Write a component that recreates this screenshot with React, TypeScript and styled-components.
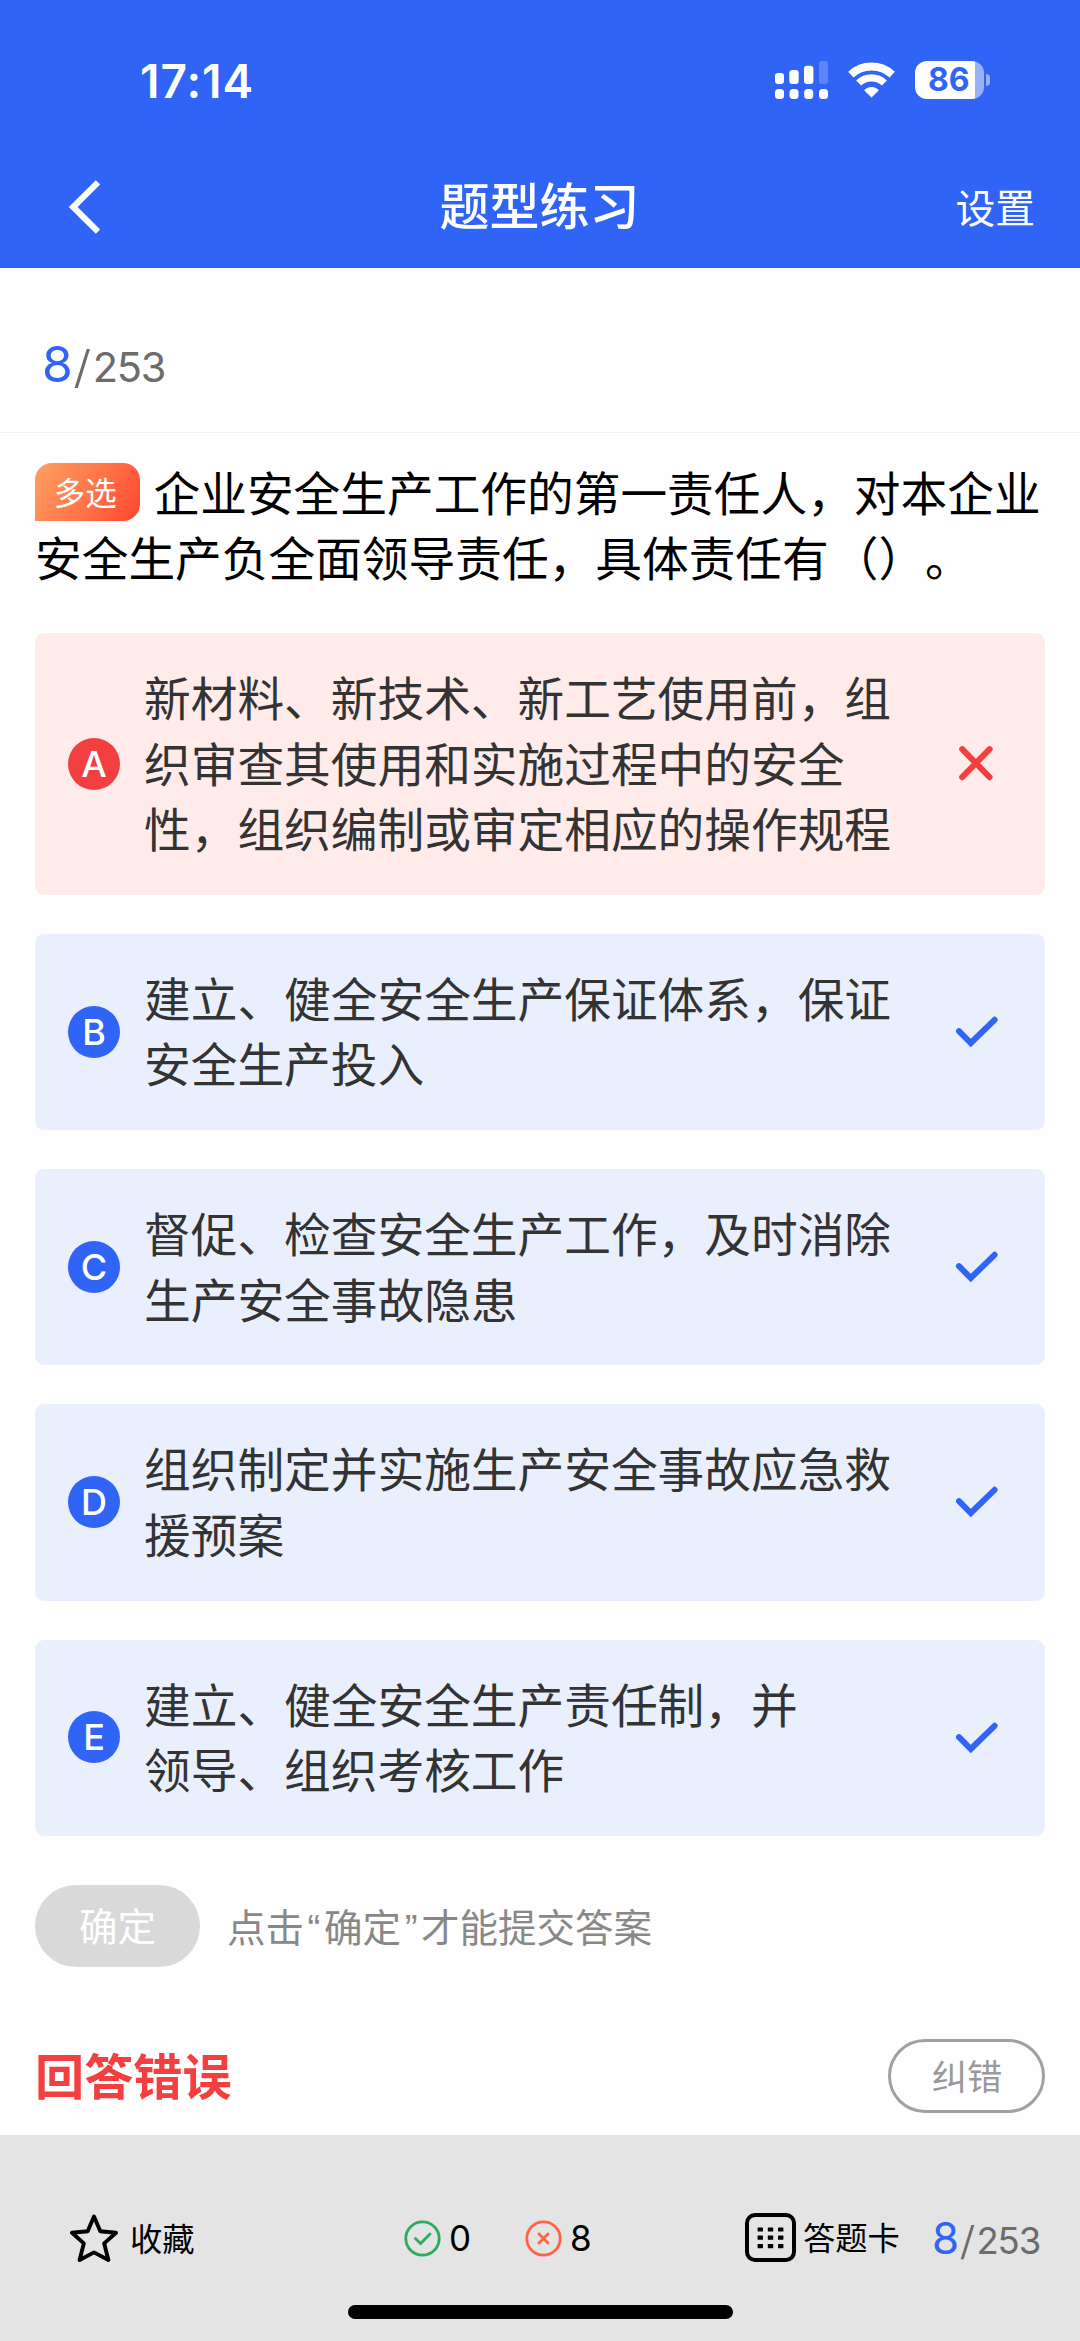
import React from "react";
import styled, { createGlobalStyle } from "styled-components";

const BLUE = "#3064f6";
const RED = "#f33f40";
const CJK = '"Noto Sans CJK SC", "Noto Sans", sans-serif';
const LATIN = 'Inter, "Liberation Sans", sans-serif';

const GlobalStyle = createGlobalStyle`
  * { box-sizing: border-box; }
  body {
    margin: 0;
    background: #fefefe;
    font-family: ${CJK};
    text-spacing-trim: space-all;
    -webkit-font-smoothing: antialiased;
  }
  button { font: inherit; border: 0; padding: 0; margin: 0; background: none; color: inherit; }
  svg { display: block; flex: none; }
`;

const Screen = styled.div`
  width: 1080px;
  height: 2341px;
  display: flex;
  flex-direction: column;
  overflow: hidden;
  background: #fefefe;
`;

const Header = styled.header`
  height: 268px;
  flex: none;
  background: ${BLUE};
  color: #fff;
`;

const StatusBar = styled.div`
  height: 160px;
  display: flex;
  justify-content: space-between;
  align-items: center;
  padding: 0 90px 0 140px;
`;

const Clock = styled.div`
  font: 600 46px/50px ${LATIN};
  letter-spacing: 1px;
  padding-top: 1px;
`;

const StatusIcons = styled.div`
  display: flex;
  align-items: center;
  gap: 20px;
`;

const Battery = styled.div`
  display: flex;
  align-items: center;
  gap: 2px;
`;

const BatteryBody = styled.div`
  width: 69px;
  height: 38px;
  border-radius: 12px;
  background: linear-gradient(to right, #fff 60px, #98b1fa 60px);
  color: ${BLUE};
  font: 700 32px/38px ${LATIN};
  padding-left: 13px;
`;

const BatteryTip = styled.div`
  width: 4px;
  height: 12px;
  border-radius: 0 4px 4px 0;
  background: #98b1fa;
`;

const NavBar = styled.nav`
  height: 94px;
  display: grid;
  grid-template-columns: 1fr auto 1fr;
  align-items: center;
  padding: 0 45px 0 68px;
`;

const NavTitle = styled.h1`
  margin: 0 0 8px;
  padding-right: 24px;
  font-size: 50px;
  line-height: 60px;
  font-weight: 500;
`;

const NavAction = styled.button`
  justify-self: end;
  font-size: 39.8px;
  line-height: 48px;
  margin-bottom: 2px;
`;

const ProgressRow = styled.div`
  height: 165px;
  flex: none;
  border-bottom: 1px solid #f1f1f1;
  padding: 67px 0 0 42px;
`;

const Counter = styled.div<{ $size: number }>`
  display: flex;
  align-items: baseline;
  font-family: ${LATIN};
  font-size: ${(p) => p.$size}px;
  line-height: 1.2;
  color: #6c6c6c;
`;

const Current = styled.span`
  color: ${BLUE};
  font-size: 1.2em;
`;

const Slash = styled.span`
  font-weight: 300;
  margin: 0 0.08em 0 0.05em;
  transform: scale(1.25, 1.08);
`;

const Total = styled.span`
  letter-spacing: -0.03em;
`;

const Content = styled.main`
  flex: none;
  height: 1702px;
  padding: 27px 35px 0;
`;

const Question = styled.p`
  margin: -2px 0 0;
  font-size: 46.7px;
  line-height: 65.3px;
  color: #000;
  white-space: nowrap;
`;

const Blank = styled.span`
  margin-left: 3px;
`;

const TypeTag = styled.span`
  display: inline-block;
  vertical-align: top;
  width: 104.5px;
  height: 58px;
  margin: 5px 14px 0 0;
  padding-right: 4px;
  border-radius: 17px 17px 17px 0;
  background: linear-gradient(120deg, #ffa062 0%, #ff7347 55%, #ff4430 100%);
  color: #fff;
  font-size: 31.5px;
  line-height: 56px;
  text-align: center;
`;

const Options = styled.div`
  display: flex;
  flex-direction: column;
  gap: 39px;
  margin-top: 44.7px;
`;

const OptionCard = styled.div<{ $wrong?: boolean }>`
  display: grid;
  grid-template-columns: 52px 1fr 44px;
  column-gap: 24px;
  align-items: center;
  padding: 30px 46px 35.4px 33px;
  border-radius: 9px;
  background: ${(p) => (p.$wrong ? "#feebea" : "#eaeffe")};
`;

const Letter = styled.div<{ $wrong?: boolean }>`
  width: 52px;
  height: 52px;
  margin-top: 4.6px;
  border-radius: 50%;
  background: ${(p) => (p.$wrong ? RED : BLUE)};
  color: #fff;
  font: 500 36px/52px ${LATIN};
  text-align: center;
`;

const OptionText = styled.div`
  font-size: 46.7px;
  line-height: 65.4px;
  color: #333;
  white-space: pre;
`;

const Mark = styled.div`
  margin-top: 5.5px;
`;

const SubmitRow = styled.div`
  display: flex;
  align-items: center;
  gap: 27px;
  margin-top: 49px;
`;

const SubmitButton = styled.button`
  width: 165px;
  height: 82px;
  border-radius: 41px;
  background: #d9d9d9;
  color: #fff;
  font-size: 38.5px;
  line-height: 79px;
  padding-bottom: 2px;
`;

const Hint = styled.div`
  font-size: 38.5px;
  line-height: 78px;
  padding-bottom: 2px;
  color: #888;
`;

const Quote = styled.span`
  display: inline-block;
  width: 0.52em;
  text-align: center;
  font-family: "Liberation Sans", sans-serif;
  line-height: 1;
`;

const ResultRow = styled.div`
  display: flex;
  align-items: center;
  justify-content: space-between;
  margin-top: 72px;
`;

const Result = styled.h2`
  margin: 0;
  padding-bottom: 4px;
  font-size: 49.2px;
  line-height: 68px;
  font-weight: 700;
  color: ${RED};
`;

const ReportButton = styled.button`
  width: 157px;
  height: 74px;
  border: 3px solid #a0a0a0;
  border-radius: 37px;
  color: #999;
  font-size: 35.3px;
  line-height: 65px;
  padding: 0 0 3px 1px;
`;

const Footer = styled.footer`
  flex: 1;
  display: flex;
  flex-direction: column;
  align-items: center;
  background: #e4e4e4;
`;

const Toolbar = styled.div`
  width: 100%;
  height: 170px;
  display: grid;
  grid-template-columns: 404px 341px 1fr;
  align-items: center;
  padding-top: 36px;
  color: #000;
`;

const ToolGroup = styled.div<{ $indent?: number; $gap: number }>`
  display: flex;
  align-items: center;
  gap: ${(p) => p.$gap}px;
  padding-left: ${(p) => p.$indent ?? 0}px;
`;

const ToolLabel = styled.span`
  font-size: 32.3px;
  line-height: 44px;
  padding-bottom: 3px;
`;

const Stat = styled.div`
  display: flex;
  align-items: center;
  gap: 8px;
  font: 400 35px/44px ${LATIN};
`;

const FooterCounter = styled.div`
  padding: 2px 0 0 25px;
`;

const HomeIndicator = styled.div`
  width: 385px;
  height: 14px;
  border-radius: 7px;
  background: #000;
`;

const SignalIcon = () => (
  <svg width="53" height="38" viewBox="0 0 53 38" fill="#fff">
    <rect x="0" y="12" width="9" height="11" rx="3" />
    <rect x="14.3" y="9" width="9.4" height="14" rx="3" />
    <rect x="29" y="4.7" width="9.4" height="18.3" rx="3" />
    <rect x="44" y="0" width="9" height="23" rx="3" opacity=".22" />
    {[0, 14.5, 29.2, 44].map((x) => (
      <rect key={x} x={x} y="28" width="9" height="10" rx="3.5" />
    ))}
  </svg>
);

const WifiIcon = () => (
  <svg width="47" height="36" viewBox="0 0 47 36" fill="none" stroke="#fff">
    <path d="M2.8 12.6C14.4 1.8 32.6 1.8 44.2 12.6" strokeWidth="7.8" />
    <path d="M10.6 21C17.8 14.2 29.2 14.2 36.4 21" strokeWidth="7.2" />
    <path d="M23.5 35 16.6 28.2C20.4 24.6 26.6 24.6 30.4 28.2Z" fill="#fff" stroke="#fff" strokeWidth="1" strokeLinejoin="round" />
  </svg>
);

const BackIcon = () => (
  <svg width="34" height="56" viewBox="0 0 34 56" fill="none" stroke="#fff" strokeWidth="6.2">
    <path d="M30 3.4 5.2 28 30 52.6" />
  </svg>
);

const CheckMark = () => (
  <svg width="44" height="34" viewBox="0 0 44 34" fill="none" stroke={BLUE} strokeWidth="6" strokeLinecap="round">
    <path d="M4 16.2 15.8 28 39.6 4.8" />
  </svg>
);

const CrossMark = () => (
  <svg width="44" height="38" viewBox="0 0 44 38" fill="none" stroke={RED} strokeWidth="6" strokeLinecap="round">
    <path d="M7.2 4.2 34.6 32.2M34.6 4.2 7.2 32.2" />
  </svg>
);

const StarIcon = () => (
  <svg width="48" height="48" viewBox="0 0 48 48" fill="none" stroke="#000" strokeWidth="3.9" strokeLinejoin="round">
    <path d="M24 2.6 30.3 17.3 46 18.8 34.2 29.4 38.4 46 24 38.4 9.6 46 13.8 29.4 2 18.8 17.7 17.3Z" />
  </svg>
);

const RightIcon = () => (
  <svg width="37" height="37" viewBox="0 0 37 37" fill="none" stroke="#2bab5c" strokeWidth="2.8" strokeLinecap="round">
    <circle cx="18.5" cy="18.5" r="16.7" />
    <path d="M11.4 18.6 16.6 23.6 26 14" />
  </svg>
);

const WrongIcon = () => (
  <svg width="37" height="37" viewBox="0 0 37 37" fill="none" stroke="#fb6544" strokeWidth="2.8" strokeLinecap="round">
    <circle cx="18.5" cy="18.5" r="16.7" />
    <path d="M14 14 23 23M23 14 14 23" />
  </svg>
);

const GridIcon = () => (
  <svg width="51" height="49" viewBox="0 0 51 49">
    <rect x="2" y="2" width="47" height="45" rx="8" fill="none" stroke="#000" strokeWidth="4" />
    {[14.4, 22.6, 31].map((y) =>
      [12.6, 22.8, 33].map((x) => <rect key={`${x}-${y}`} x={x} y={y} width="5.4" height="4.2" rx=".6" />)
    )}
  </svg>
);

const Progress = ({ size }: { size: number }) => (
  <Counter $size={size}>
    <Current>8</Current>
    <Slash>/</Slash>
    <Total>253</Total>
  </Counter>
);

const options = [
  { key: "A", wrong: true, lines: ["新材料、新技术、新工艺使用前，组", "织审查其使用和实施过程中的安全", "性，组织编制或审定相应的操作规程"] },
  { key: "B", lines: ["建立、健全安全生产保证体系，保证", "安全生产投入"] },
  { key: "C", lines: ["督促、检查安全生产工作，及时消除", "生产安全事故隐患"] },
  { key: "D", lines: ["组织制定并实施生产安全事故应急救", "援预案"] },
  { key: "E", lines: ["建立、健全安全生产责任制，并", "领导、组织考核工作"] },
];

export default function App() {
  return (
    <Screen lang="zh-CN">
      <GlobalStyle />
      <Header>
        <StatusBar>
          <Clock>17:14</Clock>
          <StatusIcons>
            <SignalIcon />
            <WifiIcon />
            <Battery>
              <BatteryBody>86</BatteryBody>
              <BatteryTip />
            </Battery>
          </StatusIcons>
        </StatusBar>
        <NavBar>
          <BackIcon />
          <NavTitle>题型练习</NavTitle>
          <NavAction>设置</NavAction>
        </NavBar>
      </Header>

      <ProgressRow>
        <Progress size={41.5} />
      </ProgressRow>

      <Content>
        <Question>
          <TypeTag>多选</TypeTag>企业安全生产工作的第一责任人，对本企业
          <br />
          安全生产负全面领导责任，具体责任有<Blank>（）。</Blank>
        </Question>

        <Options>
          {options.map((o) => (
            <OptionCard key={o.key} $wrong={o.wrong}>
              <Letter $wrong={o.wrong}>{o.key}</Letter>
              <OptionText>{o.lines.join("\n")}</OptionText>
              <Mark>{o.wrong ? <CrossMark /> : <CheckMark />}</Mark>
            </OptionCard>
          ))}
        </Options>

        <SubmitRow>
          <SubmitButton>确定</SubmitButton>
          <Hint>
            点击<Quote>“</Quote>确定<Quote>”</Quote>才能提交答案
          </Hint>
        </SubmitRow>

        <ResultRow>
          <Result>回答错误</Result>
          <ReportButton>纠错</ReportButton>
        </ResultRow>
      </Content>

      <Footer>
        <Toolbar>
          <ToolGroup $indent={70} $gap={12}>
            <StarIcon />
            <ToolLabel>收藏</ToolLabel>
          </ToolGroup>
          <ToolGroup $gap={54}>
            <Stat>
              <RightIcon />0
            </Stat>
            <Stat>
              <WrongIcon />8
            </Stat>
          </ToolGroup>
          <ToolGroup $gap={7}>
            <GridIcon />
            <ToolLabel>答题卡</ToolLabel>
            <FooterCounter>
              <Progress size={36.5} />
            </FooterCounter>
          </ToolGroup>
        </Toolbar>
        <HomeIndicator />
      </Footer>
    </Screen>
  );
}
